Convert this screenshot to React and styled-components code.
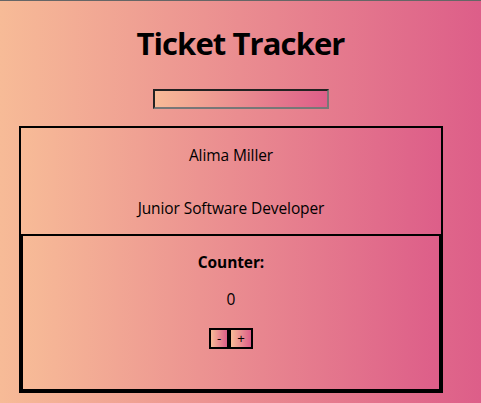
import React, { useState } from 'react';
import styled, { createGlobalStyle } from 'styled-components';

const grad = 'linear-gradient(to right, #f7bb97, #dd5e89)';

const GlobalStyle = createGlobalStyle`
  html, body {
    margin: 0;
    padding: 0;
  }
  body {
    background: ${grad};
    min-height: 100vh;
    font-family: "Open Sans", "Noto Sans", sans-serif;
    color: #000;
  }
`;

const Page = styled.div`
  border-top: 1px solid #666;
  padding-top: 22px;
  min-height: 380px;
`;

const Title = styled.h1`
  margin: 0;
  font-size: 31px;
  line-height: 40px;
  font-weight: 700;
  letter-spacing: -0.9px;
  text-align: center;
`;

const SearchInput = styled.input`
  display: block;
  box-sizing: border-box;
  width: 176px;
  height: 20px;
  margin: 26px auto 0;
  padding: 0 2px;
  background: ${grad};
  border-style: solid;
  border-width: 2px;
  border-color: #222 #777 #777 #222;
  outline: none;
`;

const Card = styled.section`
  box-sizing: border-box;
  width: 424px;
  margin: 17px 0 0 19px;
  border: 2px solid #000;
  background: ${grad};
  display: flex;
  flex-direction: column;
`;

const Profile = styled.div`
  display: flex;
  flex-direction: column;
  align-items: center;
  gap: 33px;
  padding: 17px 0 16px;
`;

const Line = styled.p`
  margin: 0;
  font-size: 15.5px;
  line-height: 20px;
  letter-spacing: -0.1px;
  font-weight: ${(p) => (p.$bold ? 700 : 400)};
  text-align: center;
`;

const CounterBox = styled.div`
  border: 2px solid #000;
  background: ${grad};
  display: flex;
  flex-direction: column;
  align-items: center;
  padding: 16px 0 40px;
`;

const Value = styled(Line)`
  margin-top: 17px;
`;

const Buttons = styled.div`
  display: flex;
  margin-top: 19px;
`;

const StepButton = styled.button`
  box-sizing: border-box;
  height: 21px;
  padding: 0 6px;
  border: 2px solid #000;
  background: ${grad};
  font-family: "Open Sans", "Noto Sans", sans-serif;
  font-size: 13.33px;
  line-height: 17px;
  color: #000;
  cursor: pointer;
`;

export default function App() {
  const [count, setCount] = useState(0);
  return (
    <>
      <GlobalStyle />
      <Page>
        <Title>Ticket Tracker</Title>
        <SearchInput type="text" />
        <Card>
          <Profile>
            <Line>Alima Miller</Line>
            <Line>Junior Software Developer</Line>
          </Profile>
          <CounterBox>
            <Line $bold>Counter:</Line>
            <Value>{count}</Value>
            <Buttons>
              <StepButton onClick={() => setCount((c) => c - 1)}>-</StepButton>
              <StepButton onClick={() => setCount((c) => c + 1)}>+</StepButton>
            </Buttons>
          </CounterBox>
        </Card>
      </Page>
    </>
  );
}
